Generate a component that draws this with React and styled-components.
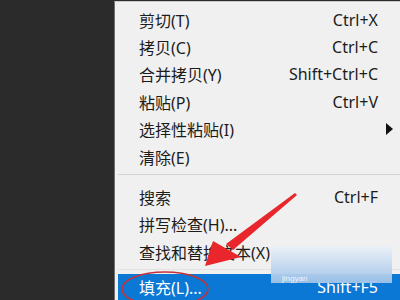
import React from "react";
import styled, { createGlobalStyle } from "styled-components";

const GlobalStyle = createGlobalStyle`
  html, body {
    margin: 0;
    padding: 0;
    background: #2b2b2b;
  }
  #root {
    width: 400px;
    height: 300px;
    overflow: hidden;
  }
`;

const Page = styled.div`
  position: relative;
  display: flex;
  width: 400px;
  height: 300px;
  overflow: hidden;
  font-family: "Noto Sans", "Noto Sans CJK SC", sans-serif;
`;

const DarkPanel = styled.div`
  width: 114px;
  background: #2b2b2b;
  flex-shrink: 0;
`;

const Menu = styled.div`
  flex: 1;
  background: #f0f0f0;
  border-left: 1px solid #6f6f6f;
  margin-top: 1px;
  border-top: 1px solid #c9c9c9;
  padding-top: 4px;
  display: flex;
  flex-direction: column;
`;

const Row = styled.div`
  display: grid;
  grid-template-columns: 1fr auto 22px;
  align-items: center;
  height: 27.4px;
  padding-left: 24px;
  margin-left: ${({ $active }) => ($active ? "3px" : "0")};
  background: ${({ $active }) => ($active ? "#0a78d4" : "transparent")};
  color: ${({ $active }) => ($active ? "#ffffff" : "#1c1c1c")};
  font-size: 16px;
  white-space: nowrap;
  flex-shrink: 0;
`;

const Label = styled.span`
  margin-left: ${({ $active }) => ($active ? "-3px" : "0")};
`;

const Shortcut = styled.span`
  text-align: right;
`;

const SubArrow = styled.span`
  justify-self: start;
  margin-left: 8px;
  width: 0;
  height: 0;
  border-top: 6px solid transparent;
  border-bottom: 6px solid transparent;
  border-left: 7px solid #111;
`;

const Separator = styled.div`
  height: 1px;
  background: ${({ $light }) => ($light ? "#e2e2e2" : "#d2d2d2")};
  margin: ${({ $m }) => $m};
  margin-left: 3px;
  flex-shrink: 0;
`;

const Watermark = styled.div`
  position: absolute;
  left: 271px;
  top: 246px;
  width: 121px;
  height: 37px;
  background: linear-gradient(
    to bottom,
    rgba(236, 241, 248, 0.95),
    rgba(160, 195, 232, 0.95)
  );
`;

const WaterText = styled.span`
  position: absolute;
  left: 282px;
  top: 274px;
  font-size: 8px;
  color: #ffffff;
  opacity: 0.85;
  font-family: "Liberation Sans", sans-serif;
`;

const Overlay = styled.svg`
  position: absolute;
  left: 0;
  top: 0;
  pointer-events: none;
`;

const top = [
  ["剪切(T)", "Ctrl+X"],
  ["拷贝(C)", "Ctrl+C"],
  ["合并拷贝(Y)", "Shift+Ctrl+C"],
  ["粘贴(P)", "Ctrl+V"],
  ["选择性粘贴(I)", "", true],
  ["清除(E)", ""],
];

const mid = [
  ["搜索", "Ctrl+F"],
  ["拼写检查(H)...", ""],
  ["查找和替换文本(X)", ""],
];

const Item = ({ label, shortcut, sub, active }) => (
  <Row $active={active}>
    <Label $active={active}>{label}</Label>
    <Shortcut>{shortcut}</Shortcut>
    {sub ? <SubArrow /> : <span />}
  </Row>
);

export default function App() {
  return (
    <Page>
      <GlobalStyle />
      <DarkPanel />
      <Menu>
        {top.map(([l, s, sub]) => (
          <Item key={l} label={l} shortcut={s} sub={sub} />
        ))}
        <Separator $m="4px 0 8px" />
        {mid.map(([l, s]) => (
          <Item key={l} label={l} shortcut={s} />
        ))}
        <Separator $light $m="3px 0 4px" />
        <Item label="填充(L)..." shortcut="Shift+F5" active />
      </Menu>
      <Watermark />
      <WaterText>jingyan</WaterText>
      <Overlay width="400" height="300" viewBox="0 0 400 300">
        <polygon points="295,193 297,195 233,250 226,244" fill="#e8262b" />
        <polygon points="205,266 213,241 241,257" fill="#e8262b" />
        <ellipse
          cx="165"
          cy="289"
          rx="43"
          ry="17"
          fill="none"
          stroke="#c4323a"
          strokeWidth="1.6"
        />
      </Overlay>
    </Page>
  );
}
